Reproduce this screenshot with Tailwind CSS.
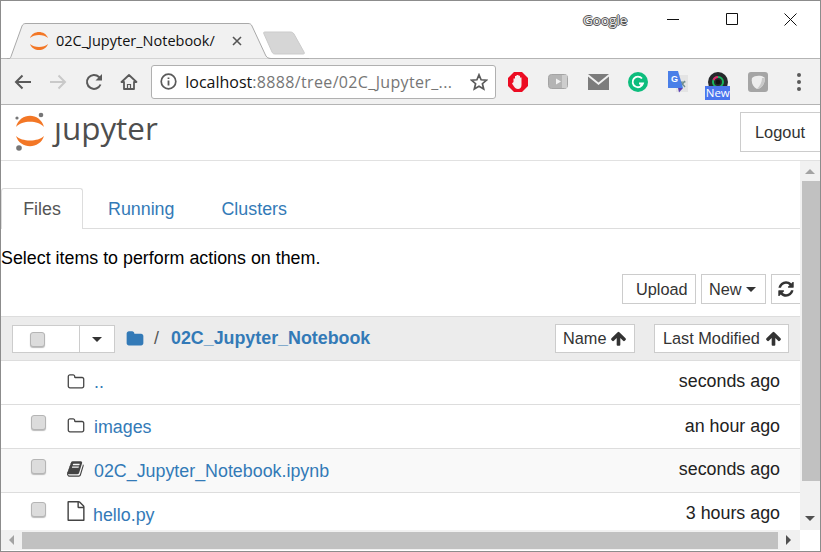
<!DOCTYPE html>
<html lang="en">
<head>
<meta charset="UTF-8" />
<title>02C_Jupyter_Notebook/</title>
<script src="https://cdn.jsdelivr.net/npm/@tailwindcss/browser@4"></script>
</head>
<body class="w-[821px] h-[552px] overflow-hidden bg-white font-['Liberation_Sans',sans-serif] text-[#333]">
<div class="flex flex-col w-full h-full border border-[#8c8c8c]">

  <!-- title bar -->
  <div class="relative flex shrink-0 h-[57px] bg-white">
    <svg class="absolute left-[6px] top-[22px]" width="302" height="36" viewBox="0 0 302 36">
      <path d="M0 35.500H2C3 35.500 3.500 35 4 33.500L15 3C16 1 17 .5 19 .5H241C243 .5 244 1 245 3L258 31C259 34 261 35.500 264 35.500H302" fill="#f1f1f1" stroke="#a9a9a9"/>
      <path d="M257 11C256 9 257 9 259 9H283C285 9 286 9.500 287 11L297 29C298 31 297 31 295 31H269C267 31 266 31 265 29Z" fill="#d6d6d6" stroke="#cbcbcb"/>
    </svg>
    <svg class="absolute left-[28px] top-[30px]" width="20" height="20" viewBox="0 0 20 20">
      <path d="M1 7C4 -1 16 -1 19 7C15 3 5 3 1 7Z" fill="#f37726"/>
      <path d="M1 13C4 21 16 21 19 13C15 17 5 17 1 13Z" fill="#f37726"/>
    </svg>
    <span class="absolute left-[55px] top-[29px] text-[14.500px] leading-[22px] text-[#111] font-['Open_Sans',sans-serif]">02C_Jupyter_Notebook/</span>
    <svg class="absolute left-[231px] top-[35px]" width="10" height="10" viewBox="0 0 10 10">
      <path d="M1 1L9 9M9 1L1 9" stroke="#555" stroke-width="1.600"/>
    </svg>
    <span class="absolute left-[582px] top-[9px] text-[13.500px] leading-[20px] text-[#e8e8e8] font-['Open_Sans',sans-serif] [text-shadow:-1px_0_#555,1px_0_#555,0_-1px_#555,0_1px_#555]">Google</span>
    <div class="ml-auto flex h-[36px]">
      <div class="flex items-center justify-center w-[59px]"><svg width="12" height="12" viewBox="0 0 12 12"><path d="M0 6.500H12" stroke="#111"/></svg></div>
      <div class="flex items-center justify-center w-[59px]"><svg width="12" height="12" viewBox="0 0 12 12"><path d="M.5 .5H11.500V11.500H.5Z" fill="none" stroke="#111"/></svg></div>
      <div class="flex items-center justify-center w-[59px]"><svg width="13" height="13" viewBox="0 0 13 13"><path d="M.5 .5L12.500 12.500M12.500 .5L.5 12.500" stroke="#111"/></svg></div>
    </div>
  </div>

  <!-- browser toolbar -->
  <div class="flex shrink-0 items-center h-[47px] bg-[#f1f1f1] border-y border-[#b4b4b4] pl-[5px]">
    <div class="flex items-center justify-center w-[35px]"><svg width="18" height="16" viewBox="0 0 18 16"><path d="M17 8H2M8.500 1.500L2 8L8.500 14.500" fill="none" stroke="#5a5a5a" stroke-width="2"/></svg></div>
    <div class="flex items-center justify-center w-[35px]"><svg width="18" height="16" viewBox="0 0 18 16"><path d="M1 8H16M9.500 1.500L16 8L9.500 14.500" fill="none" stroke="#c9c9c9" stroke-width="2"/></svg></div>
    <div class="flex items-center justify-center w-[37px]"><svg width="18" height="18" viewBox="0 0 18 18"><path d="M15.500 11.500A7 7 0 1 1 14 4L16 6" fill="none" stroke="#5a5a5a" stroke-width="2"/><path d="M17 1V7.500H10.500Z" fill="#5a5a5a"/></svg></div>
    <div class="flex items-center justify-center w-[33px]"><svg width="18" height="17" viewBox="0 0 18 17"><path d="M1.500 9L9 2L16.500 9H14V16H4V9Z" fill="none" stroke="#5a5a5a" stroke-width="1.800" stroke-linejoin="round"/><path d="M7.500 16V11.500H10.500V16" fill="none" stroke="#5a5a5a" stroke-width="1.200"/></svg></div>
    <div class="flex items-center shrink-0 w-[345px] h-[34px] ml-[6px] bg-white border border-[#b0b0b0] rounded-[3px] pl-[8px]">
      <svg width="17" height="17" viewBox="0 0 17 17"><circle cx="8.500" cy="8.500" r="7.300" fill="none" stroke="#5a5a5a" stroke-width="1.700"/><path d="M8.500 7.500V12.500M8.500 4.500V6" stroke="#5a5a5a" stroke-width="1.800"/></svg>
      <span class="ml-[8px] w-[270px] text-[16px] whitespace-nowrap font-['Open_Sans',sans-serif] text-[#767676] tracking-[.35px]"><span class="text-[#111] tracking-normal">localhost</span>:8888/tree/02C_Jupyter_...</span>
      <svg class="ml-auto mr-[7px]" width="18" height="18" viewBox="0 0 18 18"><path d="M9 1.800L11.100 6.800L16.500 7.200L12.400 10.700L13.700 16L9 13.200L4.300 16L5.600 10.700L1.500 7.200L6.900 6.800Z" fill="none" stroke="#5a5a5a" stroke-width="1.700"/></svg>
    </div>
    <div class="flex ml-[2px]">
      <div class="flex items-center justify-center w-[40px] h-[40px]"><svg width="20" height="20" viewBox="0 0 20 20"><path d="M6 0H14L20 6V14L14 20H6L0 14V6Z" fill="#ec0c23"/><path d="M5.500 10V6.500H7V9.500V4H8.500V9V3H10.500V9V3.800H12V9.500V5.500H13.500V13C13.500 15.500 12 17 10 17C8 17 7 16 6 14.500L4 11.500L5 10.500Z" fill="#f5eeee"/></svg></div>
      <div class="flex items-center justify-center w-[40px] h-[40px]"><svg width="20" height="15" viewBox="0 0 20 15"><rect x=".5" y=".5" width="19" height="14" rx="3" fill="#b4b4b4" stroke="#a4a4a4"/><rect x="14" y="1" width="5" height="13" fill="#cdcdcd"/><path d="M8 4.500L13 7.500L8 10.500Z" fill="#f1f1f1"/></svg></div>
      <div class="flex items-center justify-center w-[40px] h-[40px]"><svg width="21" height="16" viewBox="0 0 21 16"><path d="M0 0H21L10.500 8.500Z" fill="#7c7c7c"/><path d="M0 2.500L10.500 11L21 2.500V16H0Z" fill="#7c7c7c"/></svg></div>
      <div class="flex items-center justify-center w-[40px] h-[40px]"><svg width="20" height="20" viewBox="0 0 20 20"><circle cx="10" cy="10" r="10" fill="#0dbd7d"/><path d="M14 6.500A5.300 5.300 0 1 0 15 11.500H11M15 11.500L12.500 14" fill="none" stroke="#fff" stroke-width="1.800"/></svg></div>
      <div class="flex items-center justify-center w-[40px] h-[40px]"><svg width="20" height="22" viewBox="0 0 20 22"><rect x="8" y="4" width="12" height="17" fill="#e4e4e4"/><path d="M12 10L17 16M17 10L12 16M11.500 11H17.500" stroke="#6f8d8d" stroke-width="1.200"/><path d="M0 0H10L15 17H0Z" fill="#4a7fe8"/><path d="M10 17H15L11 21.500Z" fill="#5a3fb5"/><text x="3" y="11" font-size="9" font-weight="700" fill="#fff" font-family="Liberation Sans, sans-serif">G</text></svg></div>
      <div class="relative flex justify-center w-[40px] h-[40px] pt-[10px]">
        <svg width="20" height="20" viewBox="0 0 20 20"><circle cx="10" cy="10" r="10" fill="#26282c"/><circle cx="10" cy="10" r="5" fill="none" stroke="#19b65e" stroke-width="2"/><path d="M5.500 8A5 5 0 0 1 10 5" fill="none" stroke="#e5266e" stroke-width="2"/><circle cx="10" cy="10" r="2.300" fill="#111"/></svg>
        <span class="absolute left-[7px] top-[24px] w-[25px] h-[14px] bg-[#4a76ee] text-white text-[11.500px] leading-[14px] text-center font-['Open_Sans',sans-serif]">New</span>
      </div>
      <div class="flex items-center justify-center w-[40px] h-[40px]"><svg width="20" height="20" viewBox="0 0 20 20"><rect width="20" height="20" rx="3" fill="#a5a5a5"/><path d="M4 6C7 3 14 3 17 6C17 12 13 17 9 17C5 15 3 11 4 6Z" fill="#ededed"/><path d="M17 6C17 12 13 17 9 17C12 14 14 10 14 6Z" fill="#c9c9c9"/></svg></div>
    </div>
    <div class="flex flex-col items-center justify-center gap-[3px] w-[42px]">
      <span class="w-[4px] h-[4px] rounded-full bg-[#5a5a5a]"></span>
      <span class="w-[4px] h-[4px] rounded-full bg-[#5a5a5a]"></span>
      <span class="w-[4px] h-[4px] rounded-full bg-[#5a5a5a]"></span>
    </div>
  </div>

  <!-- jupyter header -->
  <div class="flex shrink-0 h-[56px] border-b border-[#e1e1e1]">
    <div class="flex items-start ml-[13px] mt-[7px]">
      <svg width="32" height="40" viewBox="0 0 32 40">
        <circle cx="27" cy="3" r="2.300" fill="#767677"/>
        <circle cx="5" cy="36" r="2.800" fill="#767677"/>
        <circle cx="3" cy="6" r="1.600" fill="#767677"/>
        <path d="M2 15C6 0 26 0 30 15C24 8 8 8 2 15Z" fill="#f37726"/>
        <path d="M2 24C6 37.500 26 37.500 30 24C24 30 8 30 2 24Z" fill="#f37726"/>
      </svg>
      <span class="ml-[8px] mt-[-4px] text-[31.400px] leading-[40px] text-[#4e4e4e] font-['Open_Sans',sans-serif]">ȷupyter</span>
    </div>
    <div class="ml-auto mt-[7px] w-[80px] h-[40px] border border-r-0 border-[#ccc] pl-[14px] text-[16.400px] leading-[38px]">Logout</div>
  </div>

  <!-- page + scrollbars -->
  <div class="flex flex-1 min-h-0">
    <div class="flex-1 min-w-0 overflow-hidden">
      <div class="flex h-[68px] pt-[27px] border-b border-[#ddd] text-[17.850px] leading-[40px]">
        <div class="w-[82px] h-[41px] bg-white border border-b-0 border-[#ddd] rounded-t-[3px] text-center text-[#555]">Files</div>
        <div class="ml-[25px] leading-[42px] text-[#337ab7]">Running</div>
        <div class="ml-[47px] leading-[42px] text-[#337ab7]">Clusters</div>
      </div>
      <div class="mt-[16px] h-[26px] text-[17.850px] leading-[26px] text-black whitespace-nowrap">Select items to perform actions on them.</div>
      <div class="flex justify-end gap-[5px] mt-[3px] h-[30px] text-[16.300px] leading-[29px]">
        <div class="w-[74px] border border-[#ccc] pl-[13px]">Upload</div>
        <div class="flex items-center w-[65px] border border-[#ccc] pl-[7px]">New<span class="ml-[4px] border-x-[5px] border-t-[5px] border-x-transparent border-t-[#333]"></span></div>
        <div class="flex items-center w-[29px] border border-r-0 border-[#ccc] pl-[5px]">
          <svg width="18" height="18" viewBox="0 0 1792 1792"><path fill="#333" d="M1639 1056q0 5-1 7-64 268-268 434.500t-478 166.500q-146 0-282.500-55t-243.500-157l-129 129q-19 19-45 19t-45-19-19-45v-448q0-26 19-45t45-19h448q26 0 45 19t19 45-19 45l-137 137q71 66 161 102t187 36q134 0 250-65t186-179q11-17 53-117 8-23 30-23h192q13 0 22.500 9.500t9.500 22.500zm25-800v448q0 26-19 45t-45 19h-448q-26 0-45-19t-19-45 19-45l138-138q-148-137-349-137-134 0-250 65t-186 179q-11 17-53 117-8 23-30 23h-199q-13 0-22.500-9.500t-9.500-22.500v-7q65-268 270-434.500t480-166.500q146 0 284 55.500t245 156.500l130-129q19-19 45-19t45 19 19 45z"/></svg>
        </div>
      </div>

      <!-- file list -->
      <div class="mt-[12px]">
        <div class="flex items-center h-[45px] bg-[#ececec] border-y border-[#ddd] px-[11px]">
          <div class="flex items-center w-[103px] h-[28px] bg-white border border-[#ccc]">
            <span class="ml-[17px] mt-[1px] w-[15px] h-[15px] bg-[#dcdcdc] border border-[#b5b5b5] rounded-[3px] shadow-[0_1px_1px_#bbb]"></span>
            <span class="flex items-center justify-center ml-[34px] w-[35px] h-full border-l border-[#ccc]"><span class="mt-[2px] border-x-[5px] border-t-[5px] border-x-transparent border-t-[#333]"></span></span>
          </div>
          <svg class="ml-[11px]" width="18" height="18" viewBox="0 0 1792 1792"><path fill="#337ab7" d="M1728 608v704q0 92-66 158t-158 66h-1216q-92 0-158-66t-66-158v-960q0-92 66-158t158-66h320q92 0 158 66t66 158v32h672q92 0 158 66t66 158z"/></svg>
          <span class="ml-[10px] text-[17.850px] text-[#555]">/</span>
          <span class="ml-[12px] text-[17.850px] font-bold text-[#337ab7]">02C_Jupyter_Notebook</span>
          <div class="flex items-center ml-auto w-[80px] h-[29px] bg-white border border-[#ccc] pl-[7px] text-[16.300px]">Name
            <svg class="ml-[4px]" width="17" height="17" viewBox="0 0 1792 1792"><path fill="#333" d="M1675 971q0 51-37 90l-75 75q-38 38-91 38-54 0-90-38l-294-293v704q0 52-37.500 84.500t-90.500 32.500h-128q-53 0-90.500-32.500t-37.500-84.500v-704l-294 293q-36 38-90 38t-90-38l-75-75q-38-38-38-90 0-53 38-91l651-651q35-37 90-37 54 0 91 37l651 651q37 39 37 91z"/></svg>
          </div>
          <div class="flex items-center ml-[19px] w-[135px] h-[29px] bg-white border border-[#ccc] pl-[8px] text-[16.300px]">Last Modified
            <svg class="ml-[5px]" width="17" height="17" viewBox="0 0 1792 1792"><path fill="#333" d="M1675 971q0 51-37 90l-75 75q-38 38-91 38-54 0-90-38l-294-293v704q0 52-37.500 84.500t-90.500 32.500h-128q-53 0-90.500-32.500t-37.500-84.500v-704l-294 293q-36 38-90 38t-90-38l-75-75q-38-38-38-90 0-53 38-91l651-651q35-37 90-37 54 0 91 37l651 651q37 39 37 91z"/></svg>
          </div>
        </div>

        <div class="flex items-center h-[44px] border-b border-[#ddd] pr-[20px] text-[17.850px]">
          <svg class="ml-[66px] mt-[-2px]" width="18" height="18" viewBox="0 0 1792 1792"><path fill="#444" d="M1600 1312v-704q0-40-28-68t-68-28h-704q-40 0-68-28t-28-68v-64q0-40-28-68t-68-28h-320q-40 0-68 28t-28 68v960q0 40 28 68t68 28h1216q40 0 68-28t28-68zm128-704v704q0 92-66 158t-158 66h-1216q-92 0-158-66t-66-158v-960q0-92 66-158t158-66h320q92 0 158 66t66 158v32h672q92 0 158 66t66 158z"/></svg>
          <span class="ml-[9px] text-[#337ab7]">..</span>
          <span class="ml-auto mt-[-2px] text-[#222]">seconds ago</span>
        </div>
        <div class="flex items-center h-[44px] border-b border-[#ddd] pr-[20px] text-[17.850px]">
          <span class="ml-[30px] mt-[-8px] w-[15px] h-[15px] bg-[#dcdcdc] border border-[#b5b5b5] rounded-[3px] shadow-[0_1px_1px_#bbb]"></span>
          <svg class="ml-[21px] mt-[-2px]" width="18" height="18" viewBox="0 0 1792 1792"><path fill="#444" d="M1600 1312v-704q0-40-28-68t-68-28h-704q-40 0-68-28t-28-68v-64q0-40-28-68t-68-28h-320q-40 0-68 28t-28 68v960q0 40 28 68t68 28h1216q40 0 68-28t28-68zm128-704v704q0 92-66 158t-158 66h-1216q-92 0-158-66t-66-158v-960q0-92 66-158t158-66h320q92 0 158 66t66 158v32h672q92 0 158 66t66 158z"/></svg>
          <span class="ml-[9px] mt-[2px] text-[#337ab7]">images</span>
          <span class="ml-auto text-[#222]">an hour ago</span>
        </div>
        <div class="flex items-center h-[44px] bg-[#f9f9f9] border-b border-[#ddd] pr-[20px] text-[17.850px]">
          <span class="ml-[30px] mt-[-8px] w-[15px] h-[15px] bg-[#dcdcdc] border border-[#b5b5b5] rounded-[3px] shadow-[0_1px_1px_#bbb]"></span>
          <svg class="ml-[21px] mt-[-4px]" width="18" height="18" viewBox="0 0 1792 1792"><path fill="#444" d="M1639 478q40 57 18 129l-275 906q-19 64-76.500 107.500t-122.500 43.500h-923q-77 0-148.500-53.500t-99.500-131.500q-24-67-2-127 0-4 3-27t4-37q1-8-3-21.500t-3-19.500q2-11 8-21t16.500-23.500 16.500-23.500q23-38 45-91.500t30-91.500q3-10 .5-30t-.5-28q3-11 17-28t17-23q21-36 42-92t25-90q1-9-2.500-32t.5-28q4-13 22-30.500t22-22.500q19-26 42.500-84.500t27.500-96.500q1-8-3-25.500t-2-26.500q2-8 9-18t18-23 17-21q8-12 16.500-30.500t15-35 16-36 19.500-32 26.500-23.500 36-11.500 47.500 5.500l-1 3q38-9 51-9h761q74 0 114 56t18 130l-274 906q-36 119-71.500 153.500t-128.500 34.500h-869q-27 0-38 15-11 16-1 43 24 70 144 70h923q29 0 56-15.500t35-41.500l300-987q7-22 5-57 38 15 59 43zm-1064 2q-4 13 2 22.500t20 9.500h608q13 0 25.500-9.500t16.500-22.500l21-64q4-13-2-22.500t-20-9.500h-608q-13 0-25.500 9.500t-16.500 22.500zm-83 256q-4 13 2 22.500t20 9.500h608q13 0 25.500-9.500t16.500-22.500l21-64q4-13-2-22.500t-20-9.500h-608q-13 0-25.500 9.500t-16.500 22.500z"/></svg>
          <span class="ml-[9px] mt-[2px] text-[#337ab7]">02C_Jupyter_Notebook.ipynb</span>
          <span class="ml-auto mt-[-2px] text-[#222]">seconds ago</span>
        </div>
        <div class="flex items-center h-[44px] pr-[20px] text-[17.850px]">
          <span class="ml-[30px] mt-[-11px] w-[15px] h-[15px] bg-[#dcdcdc] border border-[#b5b5b5] rounded-[3px] shadow-[0_1px_1px_#bbb]"></span>
          <svg class="ml-[20px] mt-[-8px]" width="20" height="20" viewBox="0 0 1792 1792"><path fill="#444" d="M1596 380q28 28 48 76t20 88v1152q0 40-28 68t-68 28h-1344q-40 0-68-28t-28-68v-1600q0-40 28-68t68-28h896q40 0 88 20t76 48zm-444-244v376h376q-10-29-22-41l-313-313q-12-12-41-22zm384 1528v-1024h-416q-40 0-68-28t-28-68v-416h-768v1536h1280z"/></svg>
          <span class="ml-[7px] text-[#337ab7]">hello.py</span>
          <span class="ml-auto mt-[-3px] text-[#222]">3 hours ago</span>
        </div>
      </div>
    </div>

    <!-- vertical scrollbar -->
    <div class="flex flex-col shrink-0 w-[20px] bg-[#f1f1f1]">
      <div class="flex items-center justify-center h-[20px]"><span class="border-x-[5px] border-b-[5px] border-x-transparent border-b-[#a3a3a3]"></span></div>
      <div class="w-[18px] ml-[2px] h-[300px] bg-[#c1c1c1]"></div>
      <div class="flex items-center justify-center mt-auto h-[23px]"><span class="border-x-[5px] border-t-[5px] border-x-transparent border-t-[#505050]"></span></div>
    </div>
  </div>

  <!-- horizontal scrollbar -->
  <div class="flex shrink-0 h-[21px]">
    <div class="flex items-center w-[799px] h-[20px] bg-[#f1f1f1]">
      <div class="flex items-center justify-center w-[21px]"><span class="border-y-[5px] border-r-[5px] border-y-transparent border-r-[#a3a3a3]"></span></div>
      <div class="w-[756px] h-[17px] bg-[#c1c1c1]"></div>
      <div class="flex items-center justify-center w-[21px]"><span class="border-y-[5px] border-l-[5px] border-y-transparent border-l-[#505050]"></span></div>
    </div>
  </div>
</div>
</body>
</html>
